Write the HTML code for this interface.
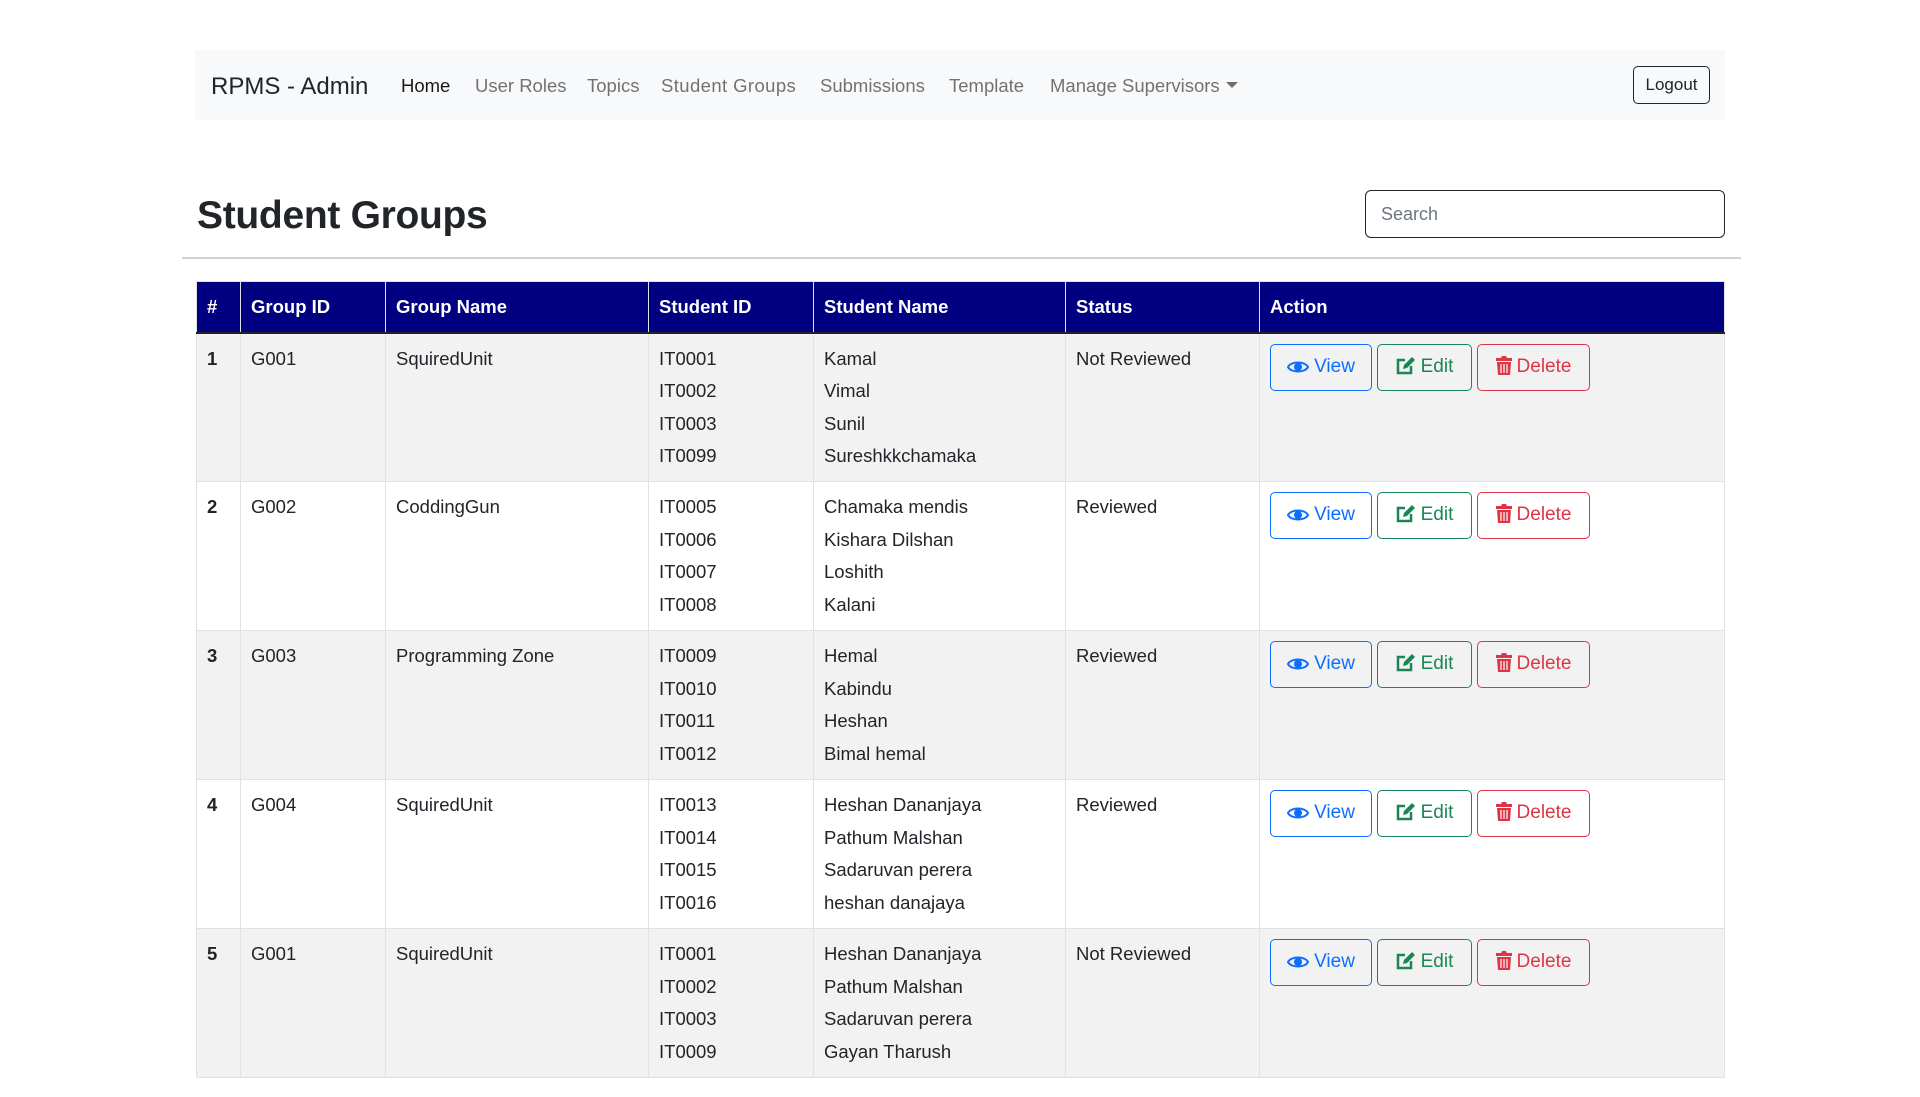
<!DOCTYPE html>
<html><head><meta charset="utf-8"><style>
*{box-sizing:border-box;margin:0;padding:0}
body{width:1920px;height:1097px;background:#fff;font-family:"Liberation Sans",sans-serif;color:#212529;position:relative;overflow:hidden}
.nav{position:absolute;left:195px;top:50px;width:1530px;height:70px;background:#f8f9fa}
.brand{position:absolute;left:16px;top:23px;font-size:24px;color:#212529}
.nav a{position:absolute;top:25px;font-size:18.5px;color:rgba(0,0,0,.55);text-decoration:none;white-space:nowrap}
.caret{display:inline-block;border-top:6px solid rgba(0,0,0,.55);border-left:6px solid transparent;border-right:6px solid transparent;vertical-align:4px;margin-left:6px}
.logout{position:absolute;left:1438px;top:16px;width:77px;height:38px;border:1.5px solid #212529;border-radius:5px;font-size:17px;text-align:center;line-height:35px}
h1{position:absolute;left:197px;top:194px;font-size:39px;font-weight:bold;letter-spacing:-0.3px}
.search{position:absolute;left:1365px;top:190px;width:360px;height:48px;border:1.5px solid #212529;border-radius:6px;font-size:18px;color:#6c757d;padding:13px 0 0 15px}
.hr{position:absolute;left:182px;top:257px;width:1559px;height:2px;background:#d3d3d3}
table{position:absolute;left:196px;top:281px;width:1529px;border-collapse:collapse;font-size:18.5px}
th{background:#000080;color:#fff;text-align:left;height:51px;padding:0 10px;border:1px solid #dee2e6;border-bottom:2px solid #222;font-size:18.5px}
td{vertical-align:top;padding:9px 10px 0;height:149px;border:1px solid #dee2e6;line-height:32.5px}
tr.o td{background:#f2f2f2}
.b{display:inline-block;height:47px;border:1.5px solid;border-radius:5px;font-size:19px;line-height:44px;text-align:center;margin-right:5px;vertical-align:top}
.v{width:102px;color:#0d6efd;border-color:#0d6efd}
.e{width:95px;color:#198754;border-color:#198754}
.d{width:113px;color:#dc3545;border-color:#dc3545}
.b svg{vertical-align:-3px;margin-right:5px}
td.a{padding-top:10px}
</style></head><body>
<div class="nav"><div class="brand">RPMS - Admin</div>
<a style="left:206px;color:rgba(0,0,0,.9)">Home</a>
<a style="left:280px">User Roles</a>
<a style="left:392px">Topics</a>
<a style="left:466px;letter-spacing:0.4px">Student Groups</a>
<a style="left:625px">Submissions</a>
<a style="left:754px">Template</a>
<a style="left:855px">Manage Supervisors<span class="caret"></span></a>
<div class="logout">Logout</div></div>
<h1>Student Groups</h1>
<div class="search">Search</div>
<div class="hr"></div>
<table>
<tr><th style="width:44px">#</th><th style="width:145px">Group ID</th><th style="width:263px">Group Name</th><th style="width:165px">Student ID</th><th style="width:252px">Student Name</th><th style="width:194px">Status</th><th>Action</th></tr>
<tr class="o"><td><b>1</b></td><td>G001</td><td>SquiredUnit</td><td>IT0001<br>IT0002<br>IT0003<br>IT0099</td><td>Kamal<br>Vimal<br>Sunil<br>Sureshkkchamaka</td><td>Not Reviewed</td><td class="a">BTNS</td></tr>
<tr><td><b>2</b></td><td>G002</td><td>CoddingGun</td><td>IT0005<br>IT0006<br>IT0007<br>IT0008</td><td>Chamaka mendis<br>Kishara Dilshan<br>Loshith<br>Kalani</td><td>Reviewed</td><td class="a">BTNS</td></tr>
<tr class="o"><td><b>3</b></td><td>G003</td><td>Programming Zone</td><td>IT0009<br>IT0010<br>IT0011<br>IT0012</td><td>Hemal<br>Kabindu<br>Heshan<br>Bimal hemal</td><td>Reviewed</td><td class="a">BTNS</td></tr>
<tr><td><b>4</b></td><td>G004</td><td>SquiredUnit</td><td>IT0013<br>IT0014<br>IT0015<br>IT0016</td><td>Heshan Dananjaya<br>Pathum Malshan<br>Sadaruvan perera<br>heshan danajaya</td><td>Reviewed</td><td class="a">BTNS</td></tr>
<tr class="o"><td><b>5</b></td><td>G001</td><td>SquiredUnit</td><td>IT0001<br>IT0002<br>IT0003<br>IT0009</td><td>Heshan Dananjaya<br>Pathum Malshan<br>Sadaruvan perera<br>Gayan Tharush</td><td>Not Reviewed</td><td class="a">BTNS</td></tr>
</table>
<script>
var b='<span class="b v"><svg width="22" height="16" viewBox="0 0 22 16"><path d="M1 8C4 2 18 2 21 8C18 14 4 14 1 8Z" fill="none" stroke="#0d6efd" stroke-width="2"/><circle cx="11" cy="8" r="4" fill="#0d6efd"/></svg>View</span><span class="b e"><svg width="20" height="19" viewBox="0 0 20 19"><path d="M9 4H2V17H15V10" fill="none" stroke="#198754" stroke-width="2.5"/><path d="M7 13L8 9L16 1L19 4L11 12Z" fill="#198754"/></svg>Edit</span><span class="b d"><svg width="16" height="19" viewBox="0 0 16 19"><path d="M0 2H5L6 0H10L11 2H16V5H0Z" fill="#dc3545"/><path d="M1 6H15L14 19H2Z" fill="#dc3545"/><path d="M5 8V17M8 8V17M11 8V17" stroke="#fff" stroke-width="1.2"/></svg>Delete</span>';
document.querySelectorAll('td.a').forEach(function(t){t.innerHTML=b});
</script>
</body></html>
